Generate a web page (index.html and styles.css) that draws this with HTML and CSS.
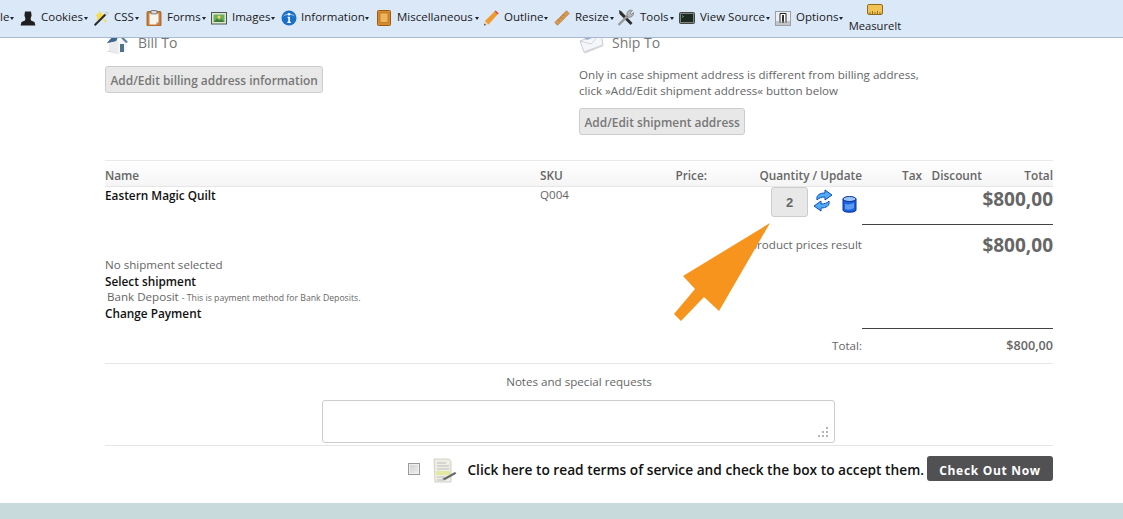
FILE: index.html
```html
<!DOCTYPE html>
<html lang="en">
<head>
<meta charset="utf-8">
<title>Cart</title>
<link rel="stylesheet" href="styles.css">
</head>
<body>
<header class="toolbar">
  <span class="tb-item tb-cut"><span>le</span><i class="caret"></i></span>
  <span class="tb-item w-cookies"><svg class="ico" viewBox="0 0 16 16"><path d="M5 1.500h6l.6 4-1 3 .4 2 3.500 1.500.9 3.500H.6l.9-3.500L5 10.500l.4-2-1-3z" fill="#1f1f1f"/></svg><span>Cookies</span><i class="caret"></i></span>
  <span class="tb-item w-css"><svg class="ico" viewBox="0 0 17 17"><path d="M7 .5l2 3.500 3.500.5-2 2.500.5 3.500-3.500-1L4 11l.5-3.500L2.500 5l3.500-1z" fill="#f4dc4e"/><path d="M1 15.500 12.500 4l1.500 1.500L2.500 17z" fill="#2b2b2b"/><path d="M12.500 4l2-2L16 3.500l-2 2z" fill="#e4e4e4" stroke="#888" stroke-width=".4"/><path d="M13 9l.6 2 2 .6-2 .6-.6 2-.6-2-2-.6 2-.6z" fill="#f4dc4e"/></svg><span>CSS</span><i class="caret"></i></span>
  <span class="tb-item w-forms"><svg class="ico" viewBox="0 0 16 16"><rect x="1" y="1.500" width="14" height="14.500" rx="1" fill="#cf7f35" stroke="#96561a" stroke-width=".8"/><path d="M3.500 3.500h9v8.500l-2.500 2.500H3.500z" fill="#f6f4ee"/><path d="M10 14.500V12h2.500z" fill="#c9c4b8"/><rect x="5" y=".5" width="6" height="3.400" rx=".8" fill="#d9d9d9" stroke="#555" stroke-width=".7"/></svg><span>Forms</span><i class="caret"></i></span>
  <span class="tb-item w-images"><svg class="ico" viewBox="0 0 16 16"><rect x=".5" y="2.500" width="15" height="11.500" fill="#dfe6d6" stroke="#4c5a48"/><rect x="2.500" y="4.500" width="11" height="7.500" fill="#6fae5a"/><path d="M2.500 12l3.500-3.500 2.500 2 2-1.500 3 3z" fill="#3f7c36"/><circle cx="8" cy="7" r="1.500" fill="#f1d95a"/></svg><span>Images</span><i class="caret"></i></span>
  <span class="tb-item w-info"><svg class="ico" viewBox="0 0 16 16"><circle cx="8" cy="8" r="7.500" fill="#1a6fc9"/><path d="M2 6.500A6.500 5 0 0 1 14 6.500 9 5 0 0 0 2 6.500z" fill="#7fb8ee"/><circle cx="8" cy="4.300" r="1.300" fill="#fff"/><path d="M6.600 6.800h2.300v5h1v1.200H6.300v-1.200h1v-3.800h-.7z" fill="#fff"/></svg><span>Information</span><i class="caret"></i></span>
  <span class="tb-item w-misc"><svg class="ico ico-book" viewBox="0 0 14 16"><rect x=".5" y=".5" width="13" height="15" rx="1" fill="#d98a2b" stroke="#9a5b14"/><rect x="3" y="3" width="8" height="9.500" fill="#efb45e" stroke="#b0701e" stroke-width=".7"/></svg><span>Miscellaneous</span><i class="caret"></i></span>
  <span class="tb-item w-outline"><svg class="ico" viewBox="0 0 16 16"><path d="M1 15.500l1-4.500 3.500 3.500z" fill="#f3d6a6"/><path d="M2 11 11.500 1.500l3 3L5.500 14.500z" fill="#ef9a2e"/><path d="M11.500 1.500l1.200-1 3 3-1.200 1z" fill="#d9402b"/><path d="M1 15.500l.4-2 1.600 1.600z" fill="#333"/></svg><span>Outline</span><i class="caret"></i></span>
  <span class="tb-item w-resize"><svg class="ico" viewBox="0 0 16 16"><path d="M.8 12.500 12.500.8l2.700 2.700L3.500 15.200z" fill="#d99a4e" stroke="#a96a26" stroke-width=".6"/><path d="M4 9.500l1.500 1.500M6.500 7l1.500 1.500M9 4.500l1.500 1.500" stroke="#8a5a1e" stroke-width=".7"/></svg><span>Resize</span><i class="caret"></i></span>
  <span class="tb-item w-tools"><svg class="ico ico-tools" viewBox="0 0 18 18"><path d="M2 1l2.500 1.500 11 11.500-2 2L2.500 5z" fill="#2e2e2e"/><path d="M1.500 16l9.500-9.500" stroke="#9a9a9a" stroke-width="2.400"/><path d="M10 6.500A4 4 0 0 1 15.500 1.500L13 4l1 1.500 2.500-2A4 4 0 0 1 11 8z" fill="#b8b8b8" stroke="#555" stroke-width=".5"/></svg><span>Tools</span><i class="caret"></i></span>
  <span class="tb-item w-source"><svg class="ico" viewBox="0 0 16 16"><rect x=".5" y="2.500" width="15" height="11" rx="1" fill="#7d8580" stroke="#444"/><rect x="2" y="4" width="12" height="8" fill="#1d2a22"/><path d="M3 5.500l1.500 1L3 7.500" stroke="#7fd07f" fill="none" stroke-width=".7"/></svg><span>View Source</span><i class="caret"></i></span>
  <span class="tb-item w-options"><svg class="ico" viewBox="0 0 16 16"><rect x=".5" y="1.500" width="15" height="14" fill="#eceff1" stroke="#9aa0a5"/><path d="M5 13V3.500h6V13" fill="#fff" stroke="#222" stroke-width="1"/><rect x="7" y="5" width="2" height="8" fill="#333"/><rect x="1" y="11" width="14" height="4" fill="#8d9296" opacity=".45"/></svg><span>Options</span><i class="caret"></i></span>
  <span class="tb-measure"><svg class="ico-measure" viewBox="0 0 16 11"><rect x=".5" y=".5" width="15" height="10" rx="1.500" fill="#f0c354" stroke="#8d6a1c"/><path d="M3 10V8M5.500 10V7M8 10V8M10.500 10V7M13 10V8" stroke="#6b4d10" stroke-width=".7"/></svg><span>MeasureIt</span></span>
</header>

<main class="page">
  <section class="addresses">
    <div class="addr">
      <h2 class="addr-head"><svg class="addr-ico" viewBox="0 0 25 25"><path d="M1 21l12 3 8-4-8 .5z" fill="#cfcfcf"/><path d="M4 12v9l9 3V11l-3-5z" fill="#e9ebee"/><path d="M13 11l6-2 3 3v8l-9 4z" fill="#f4f5f6"/><path d="M2 13 11 3l3 0 9 9-2 1-7-7-3 5z" fill="#5a7fa6"/><path d="M11 3l3 0-3 8-9 2z" fill="#3f6690"/><rect x="15" y="14" width="4" height="8" fill="#4f7488"/></svg><span>Bill To</span></h2>
      <button class="btn-light" type="button">Add/Edit billing address information</button>
    </div>
    <div class="addr">
      <h2 class="addr-head"><svg class="addr-ico" viewBox="0 0 25 25"><path d="M1 11 22 3l2 12-19 7z" fill="#f4f6f9" stroke="#bcc3cf" stroke-width=".8"/><path d="M1 11l11 3 10-11" fill="none" stroke="#c4cbd7" stroke-width=".8"/><path d="M5 8 17 4l1 2L8 10z" fill="#9db0d0"/><path d="M5 22l19-7 .5 1L6 23.500z" fill="#d5d5d5"/></svg><span>Ship To</span></h2>
      <p class="addr-note">Only in case shipment address is different from billing address,<br>click »Add/Edit shipment address« button below</p>
      <button class="btn-light" type="button">Add/Edit shipment address</button>
    </div>
  </section>

  <section class="cart">
    <div class="cart-head">
      <span>Name</span><span>SKU</span><span class="r">Price:</span><span class="r">Quantity / Update</span><span class="r">Tax</span><span class="r">Discount</span><span class="r">Total</span>
    </div>
    <div class="cart-row">
      <a class="item-name">Eastern Magic Quilt</a>
      <span class="sku">Q004</span>
      <div class="qty">
        <span class="qty-box">2</span>
        <svg class="qty-refresh" viewBox="0 0 20 23"><path d="M4 11C3 6 7 4 12 4V1l7 5-7 5V8C8 8 6 9 4 11z" fill="#52aaf5" stroke="#0d4fb8"/><path d="M16 12c1 5-3 7-8 7v3l-7-5 7-5v3c4 0 6-1 8-3z" fill="#52aaf5" stroke="#0d4fb8"/></svg>
        <svg class="qty-drop" viewBox="0 0 15 17"><path d="M1 3v11c0 3 13 3 13 0V3z" fill="#1a62e0" stroke="#0b2f9a"/><ellipse cx="7.500" cy="3" rx="6.500" ry="2.500" fill="#9cc4f6" stroke="#0b2f9a"/><path d="M3 8c3 1 6 0 9-1v5c-3 2-6 2-9 1z" fill="#5d9bf3"/></svg>
      </div>
      <strong class="money total-cell">$800,00</strong>
    </div>
    <div class="summary">
      <div class="summary-left">
        <p class="muted">No shipment selected</p>
        <a class="dark-link">Select shipment</a>
        <p class="payment"><span class="pay-name">Bank Deposit</span> <small>- This is payment method for Bank Deposits.</small></p>
        <a class="dark-link">Change Payment</a>
      </div>
      <span class="sum-label">product prices result</span>
      <div class="sum-value-cell"><strong class="money">$800,00</strong></div>
    </div>
    <div class="grand">
      <span class="grand-label">Total:</span>
      <strong class="grand-value">$800,00</strong>
    </div>
  </section>

  <section class="notes">
    <label class="notes-label" for="notes">Notes and special requests</label>
    <div class="notes-wrap">
      <textarea id="notes" class="notes-input"></textarea>
      <svg class="grip" viewBox="0 0 12 12"><path d="M9 1h2v2H9zM5 5h2v2H5zM9 5h2v2H9zM1 9h2v2H1zM5 9h2v2H5zM9 9h2v2H9z" fill="#b5b5b5"/></svg>
    </div>
  </section>

  <section class="checkout">
    <input class="tos-check" type="checkbox" aria-label="Accept terms">
    <svg class="tos-ico" viewBox="0 0 24 25"><path d="M1 1h15l2 2v21H2z" fill="#eeeee6" stroke="#d0d0c8"/><path d="M4 5h9M4 8h12M4 11h12" stroke="#bdbdb5"/><rect x="3" y="13" width="14" height="4" fill="#e4e8a0"/><path d="M4 19h8M4 22h8" stroke="#bdbdb5"/><path d="M9 21 22 14l1.500 1.500L12 22z" fill="#666"/></svg>
    <a class="tos-text">Click here to read terms of service and check the box to accept them.</a>
    <button class="btn-dark" type="button">Check Out Now</button>
  </section>
</main>

<svg class="arrow" viewBox="0 0 110 110"><polygon points="97,1 10,54 22,67 1,92 8,99 31,75 46,89" fill="#f7941e"/></svg>

<footer class="foot"></footer>
</body>
</html>
```
FILE: styles.css
```css
* { box-sizing: border-box; }
html, body { margin: 0; padding: 0; height: 519px; overflow: hidden; background: #fff; }
body { font-family: "Open Sans", "Noto Sans", sans-serif; font-size: 11.6px; color: #666; display: flex; flex-direction: column; position: relative; }

.toolbar { flex: none; height: 38px; display: flex; align-items: flex-start; background: #dae8f8; border-bottom: 1px solid #a9b9d4; font-size: 11.5px; color: #1a1a1a; position: relative; z-index: 2; white-space: nowrap; }
.tb-item { display: flex; align-items: center; height: 17px; margin-top: 9px; gap: 5px; position: relative; }
.tb-item > span { padding-bottom: 2px; }
.tb-item > .caret { margin-left: -4px; }
.caret { width: 0; height: 0; border: 2px solid transparent; border-top: 3px solid #222; border-bottom: 0; display: block; margin-top: 1px; }
.ico { width: 16px; height: 16px; flex: none; }
.ico-book { width: 14px; }
.ico-tools { width: 18px; height: 18px; }
.tb-cut { width: 20px; }
.w-cookies { width: 73px; }
.w-css { width: 53px; }
.w-forms { width: 65px; }
.w-images { width: 70px; }
.w-info { width: 96px; gap: 4px; }
.w-misc { width: 106px; gap: 6px; }
.w-outline { width: 71px; }
.w-resize { width: 63px; }
.w-tools { width: 62px; }
.w-source { width: 96px; }
.w-options { width: 74px; }
.tb-measure { display: flex; flex-direction: column; align-items: center; width: 52px; margin-top: 4px; line-height: 16px; gap: 3px; font-size: 11.2px; }
.ico-measure { width: 16px; height: 11px; display: block; }

.page { flex: 1; overflow: hidden; padding: 0 70px 0 105px; }
.addresses { display: grid; grid-template-columns: 474px 1fr; height: 131px; margin-top: -8px; border-bottom: 1px solid #e9e9e9; }
.addr-head { display: flex; align-items: center; gap: 8px; height: 24px; margin: 0; font-size: 14px; font-weight: 400; color: #777; }
.addr-ico { width: 25px; height: 25px; flex: none; }
.addr-note { margin: 13px 0 9px; font-size: 11.6px; line-height: 16px; color: #666; }
.btn-light { display: block; height: 27px; padding: 0 4.5px; font: 600 11.9px "Open Sans", "Noto Sans", sans-serif; color: #777; background: #e8e8e8; border: 1px solid #ccc; border-radius: 3px; }
.addr > .addr-head + .btn-light { margin-top: 12px; }

.cart-head { display: grid; grid-template-columns: 435px 100px 67px 155px 60px 60px 71px; height: 26px; padding-top: 3px; align-items: center; font-weight: 600; font-size: 11.8px; color: #666; background: linear-gradient(#fff, #f5f5f5); border-bottom: 1px solid #e6e6e6; }
.r { text-align: right; }
.cart-row { display: grid; grid-template-columns: 435px 100px 222px 191px; height: 38px; position: relative; }
.item-name, .dark-link { color: #111; font-weight: 600; font-size: 11.8px; line-height: 16px; display: block; }
.sku { line-height: 16px; }
.qty { display: flex; align-items: flex-start; justify-content: flex-end; padding-right: 5px; }
.qty-box { width: 37px; height: 30px; margin-right: 5px; display: flex; align-items: center; justify-content: center; background: #e8e8e8; border: 1px solid #ccc; border-radius: 3px; font: 700 13px "Liberation Sans", sans-serif; color: #666; }
.qty-refresh { width: 20px; height: 23px; margin-top: 2px; margin-right: 9px; }
.qty-drop { width: 15px; height: 17px; margin-top: 9px; }
.money { font-size: 19px; font-weight: 700; color: #666; line-height: 24px; }
.total-cell { border-bottom: 1px solid #444; text-align: right; height: 38px; }

.summary { display: grid; grid-template-columns: 757px 191px; height: 104px; }
.summary-left { grid-column: 1; grid-row: 1; padding-top: 32px; }
.summary-left p { margin: 0; line-height: 16px; height: 16px; }
.payment { padding-left: 2px; white-space: nowrap; }
.payment small { font-size: 8.7px; }
.sum-label { grid-column: 1; grid-row: 1; justify-self: end; align-self: start; padding-top: 12px; line-height: 16px; }
.sum-value-cell { grid-column: 2; grid-row: 1; text-align: right; border-bottom: 1px solid #444; padding-top: 8px; }

.grand { display: grid; grid-template-columns: 757px 191px; height: 35px; padding-top: 9px; line-height: 16px; border-bottom: 1px solid #e6e6e6; }
.grand-label { text-align: right; }
.grand-value { font-size: 12.6px; font-weight: 600; color: #666; text-align: right; }

.notes { height: 82px; text-align: center; border-bottom: 1px solid #e6e6e6; }
.notes-label { display: block; padding-top: 9px; line-height: 17px; }
.notes-wrap { position: relative; width: 513px; height: 43px; margin: 10px 0 0 217px; }
.notes-input { display: block; width: 100%; height: 100%; resize: none; border: 1px solid #ccc; border-radius: 3px; background: #fff; }
.grip { position: absolute; right: 6px; bottom: 5px; width: 12px; height: 12px; }

.checkout { display: flex; align-items: center; justify-content: flex-end; height: 57px; padding-bottom: 12px; }
.tos-check { appearance: none; width: 12px; height: 12px; margin: 0 13px 0 0; border: 1px solid #9a9a9a; background: linear-gradient(135deg, #cfcfcf, #f0f0f0); box-shadow: inset 0 0 0 1px #eee; }
.tos-ico { width: 24px; height: 25px; margin: 3px 10px 0 0; }
.tos-text { font-size: 13.73px; font-weight: 600; color: #111; white-space: nowrap; margin-right: 3px; padding-top: 2px; }
.btn-dark { width: 126px; height: 25px; background: #515153; color: #fff; border: 0; border-radius: 3px; font: 700 12px "Open Sans", "Noto Sans", sans-serif; letter-spacing: .7px; padding: 3px 0 0; }

.arrow { position: absolute; left: 673px; top: 222px; width: 110px; height: 110px; z-index: 1; }
.foot { flex: none; height: 16px; background: #c8dadc; }
```
